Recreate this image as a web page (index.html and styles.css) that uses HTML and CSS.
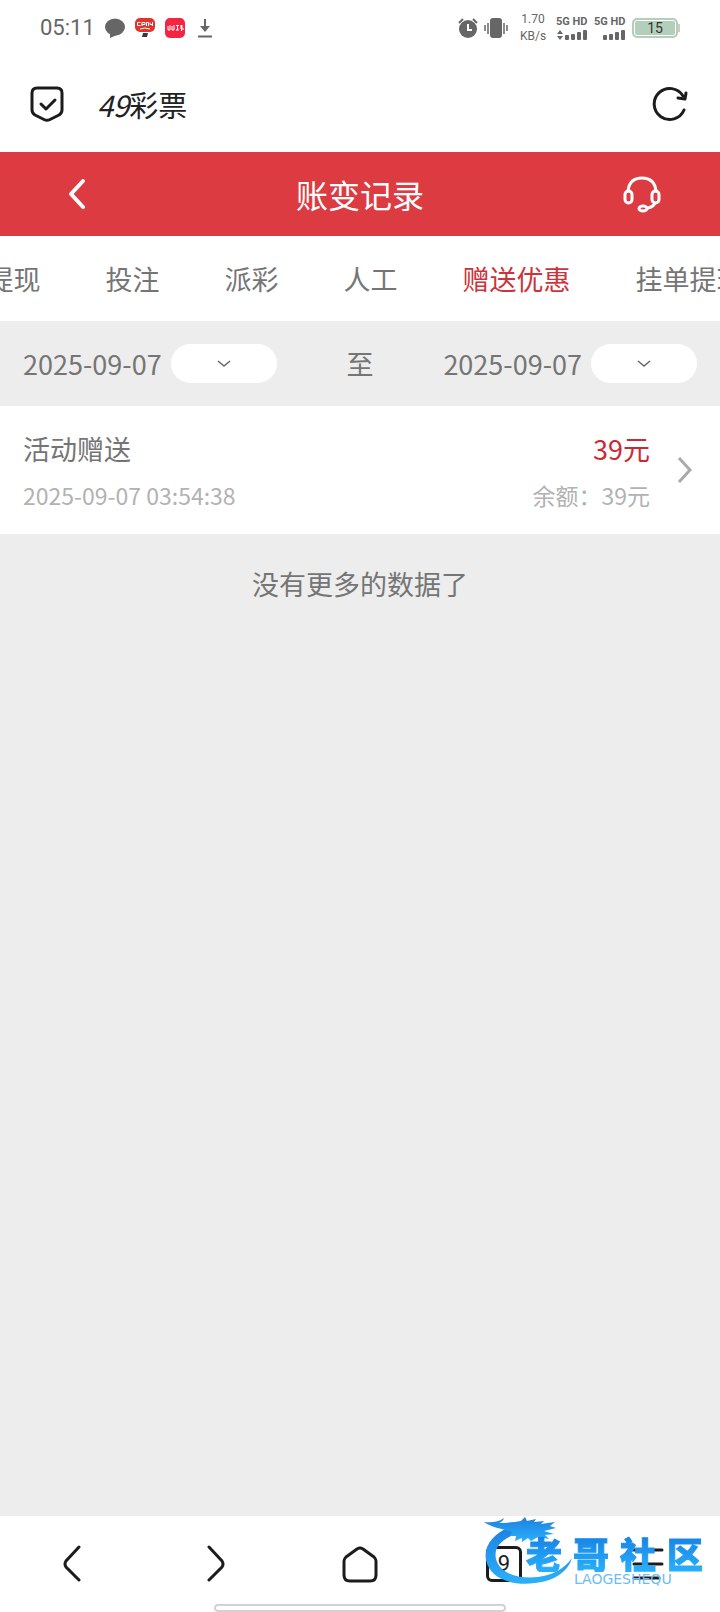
FILE: index.html
```html
<!DOCTYPE html>
<html lang="zh-CN">
<head>
    <meta charset="UTF-8">
    <meta name="viewport" content="width=device-width, initial-scale=1.0">
    <title>账变记录</title>
    <link rel="stylesheet" href="styles.css">
</head>
<body>
    <!-- status bar -->
    <div class="status">
        <span class="clock">05:11</span>
        <svg width="20" height="20" viewBox="0 0 20 20"><ellipse cx="10" cy="9" rx="10" ry="8.6" fill="#666"/><path d="M5 15v5l7-3z" fill="#666"/></svg>
        <svg class="app" width="20" height="20" viewBox="0 0 20 20"><rect y="0" width="20" height="14" rx="5" fill="#e2332d"/><path d="M2.500 4.500h3M2.500 4.500v3h3M7 8V4.500h3v2H7M11.500 8V4.500h2V8M15 4.500v2h2.500M17.500 4v4M5 11q5-2 10 0" fill="none" stroke="#fff" stroke-width="1"/><path d="M8 15h5l-1 4H7z" fill="#433"/></svg>
        <svg class="app" width="20" height="20" viewBox="0 0 20 20"><rect width="20" height="20" rx="5" fill="#f52443"/><path d="M3 8v4M5 7v5H3M7 8v4M9 7v5H7M11 7.500h3M12.500 7.500V12M11 12h3M15 8h3M16.500 7v6M15 10h3v2" fill="none" stroke="#fff" stroke-width="1"/></svg>
        <svg class="app download" width="14" height="20" viewBox="0 0 14 20"><path d="M7 1v11M0 18.500h14" stroke="#666" stroke-width="2" fill="none"/><path d="M2 8h10l-5 6z" fill="#666"/></svg>
        <div class="status-right">
            <svg width="20" height="20" viewBox="0 0 20 20"><circle cx="10" cy="11" r="9" fill="#666"/><path d="M1 5l4-4M19 5l-4-4" stroke="#666" stroke-width="2"/><path d="M10 6v6h4" fill="none" stroke="#fff" stroke-width="2"/></svg>
            <svg width="24" height="20" viewBox="0 0 24 20"><rect x="6" width="12" height="20" rx="3" fill="#666"/><path d="M1 7v6M4 5v11M20 5v11M23 7v6" stroke="#666" stroke-width="1.500"/></svg>
            <span class="speed">1.70<br>KB/s</span>
            <span class="sim">5G HD
                <svg width="32" height="12" viewBox="0 0 32 12" fill="#666"><path d="M1 5l3-4 3 4zM1 7h6l-3 4z"/><rect x="9" y="6" width="4" height="5" rx="1"/><rect x="15" y="5" width="4" height="6" rx="1"/><rect x="21" y="3" width="4" height="8" rx="1"/><rect x="27" y="1" width="4" height="10" rx="1"/></svg>
            </span>
            <span class="sim">5G HD
                <svg width="32" height="12" viewBox="0 0 32 12" fill="#666"><rect x="9" y="6" width="4" height="5" rx="1"/><rect x="15" y="5" width="4" height="6" rx="1"/><rect x="21" y="3" width="4" height="8" rx="1"/><rect x="27" y="1" width="4" height="10" rx="1"/></svg>
            </span>
            <span class="battery">15</span>
        </div>
    </div>

    <!-- browser title bar -->
    <div class="browser-bar">
        <svg width="34" height="36" viewBox="0 0 34 36" fill="none" stroke="#1c1c1c" stroke-width="3" stroke-linecap="round" stroke-linejoin="round"><path d="M7 2h20q5 0 5 5v17q0 3-3 5l-9 4.500q-3 1.500-6 0L5 29q-3-2-3-5V7q0-5 5-5z"/><path d="M11 18l5 5 9-9"/></svg>
        <span class="site-name"><em>49</em>彩票</span>
        <button class="icon-btn" aria-label="刷新">
            <svg width="36" height="36" viewBox="0 0 36 36" fill="none" stroke="#1c1c1c" stroke-width="3" stroke-linecap="round" stroke-linejoin="round"><path d="M32 24A15.500 15.500 0 1 1 31 10"/><path d="M34 7l-1 6-7-1"/></svg>
        </button>
    </div>

    <header class="page-head">
        <button class="icon-btn back" aria-label="返回">
            <svg width="18" height="32" viewBox="0 0 18 32" fill="none" stroke="#fff" stroke-width="4" stroke-linecap="round" stroke-linejoin="round"><path d="M15 3L3 16l12 13"/></svg>
        </button>
        <h1>账变记录</h1>
        <button class="icon-btn service" aria-label="客服">
            <svg width="40" height="38" viewBox="0 0 40 38" fill="none" stroke="#fff" stroke-width="3" stroke-linecap="round"><path d="M6 16C7 7 12 3 20 3s13 4 14 13"/><rect x="3" y="16" width="7" height="12" rx="3.500"/><rect x="30" y="16" width="7" height="12" rx="3.500"/><path d="M33 28q-2 4-7 5"/><ellipse cx="21" cy="33.500" rx="4" ry="2.500"/></svg>
        </button>
    </header>

    <nav class="tabs">
        <a href="#">提现</a>
        <a href="#">投注</a>
        <a href="#">派彩</a>
        <a href="#">人工</a>
        <a href="#" class="active">赠送优惠</a>
        <a href="#">挂单提现</a>
    </nav>

    <div class="dates">
        <div class="date">
            <span>2025-09-07</span>
            <button class="pick" aria-label="开始日期">
                <svg width="14" height="8" viewBox="0 0 14 8" fill="none" stroke="#666" stroke-width="1.500"><path d="M1 1l6 5 6-5"/></svg>
            </button>
        </div>
        <span>至</span>
        <div class="date">
            <span>2025-09-07</span>
            <button class="pick" aria-label="结束日期">
                <svg width="14" height="8" viewBox="0 0 14 8" fill="none" stroke="#666" stroke-width="1.500"><path d="M1 1l6 5 6-5"/></svg>
            </button>
        </div>
    </div>

    <main>
        <a href="#" class="record">
            <div class="record-info">
                <div class="line"><span>活动赠送</span><span class="amount">39元</span></div>
                <div class="line sub"><span>2025-09-07 03:54:38</span><span>余额：39元</span></div>
            </div>
            <svg width="16" height="28" viewBox="0 0 16 28" fill="none" stroke="#aaa" stroke-width="3"><path d="M2 2l11 12L2 26"/></svg>
        </a>
        <p class="no-more">没有更多的数据了</p>
    </main>

    <footer class="toolbar">
        <div class="tools">
            <button class="icon-btn" aria-label="后退">
                <svg width="36" height="38" viewBox="0 0 36 38" fill="none" stroke="#1c1c1c" stroke-width="3" stroke-linecap="round"><path d="M25 2L12 16q-2 3 0 6l13 13"/></svg>
            </button>
            <button class="icon-btn" aria-label="前进">
                <svg width="36" height="38" viewBox="0 0 36 38" fill="none" stroke="#1c1c1c" stroke-width="3" stroke-linecap="round"><path d="M11 2l13 14q2 3 0 6L11 35"/></svg>
            </button>
            <button class="icon-btn" aria-label="主页">
                <svg width="36" height="38" viewBox="0 0 36 38" fill="none" stroke="#1c1c1c" stroke-width="3" stroke-linejoin="round"><path d="M4 12L15 4q3-2 6 0l11 8q2 2 2 4v14q0 6-6 6H8q-6 0-6-6V16q0-2 2-4z"/></svg>
            </button>
            <button class="icon-btn" aria-label="窗口"><span class="pages">9</span></button>
            <button class="icon-btn" aria-label="菜单">
                <svg width="36" height="38" viewBox="0 0 36 38" stroke="#1c1c1c" stroke-width="3" stroke-linecap="round"><path d="M4 5h28M4 19h28M4 33h25"/></svg>
            </button>
        </div>
        <div class="home-line"></div>

        <!-- community logo lies over the toolbar -->
        <div class="watermark">
            <svg class="dragon" width="92" height="72" viewBox="0 0 92 72">
                <defs>
                    <linearGradient id="blue" x1="0" y1="0" x2="0" y2="1"><stop offset="0" stop-color="#1b80e0"/><stop offset="1" stop-color="#2bb0fa"/></linearGradient>
                </defs>
                <g fill="url(#blue)">
                    <path d="M34 8C12 14-1 28 2 44c4 19 26 26 49 23 19-2 33-11 37-25-8 11-19 17-34 19-19 2-38-3-42-18-3-13 8-22 26-27z"/>
                    <path d="M0 6c8 1 15 0 20-4-1 3-3 4-5 5 8 0 15-1 22-2l4-4 2 4 9-2-2 3 10-1-3 3 14-2-5 4 6 2-12 3 10 3-9 1 4 4-11-2-7 4-3-3-6 4 0-4-7 3 1-5-6 0 2-4C20 13 8 12 0 6z"/>
                </g>
            </svg>
            <div class="wm-text">
                <div class="wm-name"><span>老</span><span>哥</span><span>社</span><span>区</span></div>
                <div class="wm-latin">LAOGESHEQU</div>
            </div>
        </div>
    </footer>
</body>
</html>
```
FILE: styles.css
```css
* { box-sizing: border-box; }
body { margin: 0; min-height: 100vh; display: flex; flex-direction: column; background: #ededed; color: #757575; font-family: "Noto Sans CJK SC", sans-serif; font-size: 27px; line-height: 40px; overflow-x: hidden; }
a { color: inherit; text-decoration: none; }
svg { display: block; flex: none; }
.icon-btn { display: flex; justify-content: center; align-items: center; padding: 0; border: 0; background: none; }

.status { display: flex; align-items: center; height: 56px; padding: 0 40px; background: #fff; color: #666; }
.clock { width: 65px; font-family: Roboto, sans-serif; font-size: 22px; }
.status .app { margin-left: 10px; }
.status .download { margin-left: 13px; }
.status-right { display: flex; align-items: center; gap: 6px; margin-left: auto; }
.speed { width: 30px; margin: 0 2px 0 4px; font: 12px/17px Roboto, sans-serif; text-align: center; }
.sim { width: 32px; font: bold 11px/14px Roboto, sans-serif; white-space: nowrap; }
.battery { position: relative; width: 46px; height: 20px; margin-right: 2px; border: 2px solid #b3cfbc; border-radius: 5px; background: #b3cfbc; color: #333; font: 14px/16px Roboto, sans-serif; text-align: center; box-shadow: inset 0 0 0 1px #fff; }
.battery::after { content: ""; position: absolute; right: -4px; top: 4px; width: 2px; height: 8px; background: #ccc; }

.browser-bar { display: flex; align-items: center; height: 96px; padding: 0 32px 0 30px; background: #fff; color: #222; }
.site-name { flex: 1; margin-left: 33px; font-size: 29px; }

.page-head { display: grid; grid-template-columns: 1fr auto 1fr; align-items: center; height: 84px; padding: 0 58px; background: #dc3b42; color: #fff; }
.page-head h1 { margin: 0; font-size: 32px; font-weight: normal; line-height: 46px; }
.back { justify-self: start; padding-left: 10px; }
.service { justify-self: end; }

.tabs { display: flex; justify-content: center; gap: 65px; height: 85px; padding-left: 10px; background: #fff; line-height: 86px; white-space: nowrap; overflow: hidden; }
.tabs .active { color: #cd333b; }

.dates { display: flex; align-items: center; justify-content: space-between; height: 85px; padding: 0 23px; }
.date { display: flex; align-items: center; gap: 9px; }
.pick { display: flex; align-items: center; justify-content: center; width: 106px; height: 39px; padding: 0; border: 0; border-radius: 20px; background: #fff; }

main { flex: 1; }
.record { display: flex; align-items: center; gap: 27px; height: 128px; padding: 0 27px 0 23px; background: #fff; }
.record-info { flex: 1; padding-top: 4px; }
.line { display: flex; justify-content: space-between; line-height: 46px; }
.sub { color: #b2b2b2; font-size: 23px; }
.amount { color: #cc2a32; }
.no-more { margin: 30px 0; text-align: center; }

.toolbar { position: relative; height: 96px; background: #fff; }
.tools { display: grid; grid-template-columns: repeat(5, 1fr); height: 96px; }
.pages { width: 36px; height: 36px; border: 3px solid #1c1c1c; border-radius: 6px; color: #1c1c1c; font: 22px/30px Roboto, sans-serif; }
.home-line { position: absolute; left: 50%; bottom: 0; width: 292px; height: 8px; margin-left: -146px; border: 2px solid #d2d2d2; border-radius: 4px; background: #fff; }

.watermark { position: absolute; right: 17px; top: 0; display: flex; }
.dragon { margin-right: -50px; }
.wm-text { padding-top: 18px; }
.wm-name { display: flex; gap: 11px; font-size: 36px; font-weight: 900; line-height: 38px; }
.wm-name span { color: transparent; background: linear-gradient(#1680e4, #28b0fc); background-clip: text; -webkit-background-clip: text; -webkit-text-stroke: 1px transparent; }
.wm-latin { padding-left: 48px; color: #6dbcf2; font: 14px/14px "DejaVu Sans", sans-serif; }
```
